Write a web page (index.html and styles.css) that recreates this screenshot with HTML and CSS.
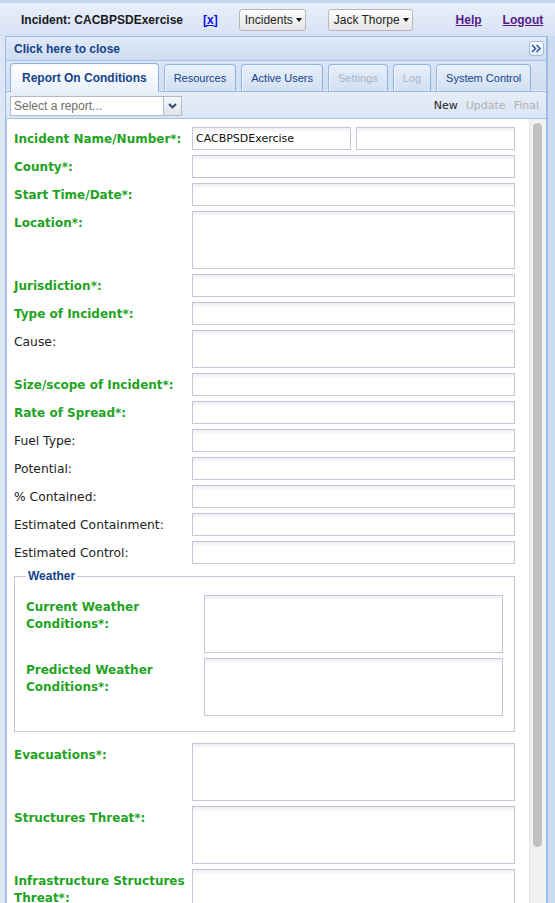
FILE: index.html
```html
<!DOCTYPE html>
<html>
<head>
<meta charset="utf-8">
<link rel="stylesheet" href="styles.css">
</head>
<body>
<div class="topbar">
  <span class="title">Incident: CACBPSDExercise</span>
  <a class="xlink" href="#">[x]</a>
  <span class="drop">Incidents<svg class="tri" width="6" height="4" viewBox="0 0 6 4"><path d="M0 0h6L3 4z" fill="#111"/></svg></span>
  <span class="drop user">Jack Thorpe<svg class="tri" width="6" height="4" viewBox="0 0 6 4"><path d="M0 0h6L3 4z" fill="#111"/></svg></span>
  <a class="link help" href="#">Help</a>
  <a class="link" href="#">Logout</a>
</div>
<div class="frame">
  <div class="panel">
    <div class="phead">
      <span class="ptitle">Click here to close</span>
      <span class="tool"><svg width="11" height="9" viewBox="0 0 11 9"><path d="M1 1l3.5 3.5L1 8M5.5 1L9 4.5 5.5 8" fill="none" stroke="#2b5aa6" stroke-width="1.6"/></svg></span>
    </div>
    <div class="tabstrip">
      <span class="tab active">Report On Conditions</span>
      <span class="tab">Resources</span>
      <span class="tab">Active Users</span>
      <span class="tab disabled">Settings</span>
      <span class="tab disabled">Log</span>
      <span class="tab">System Control</span>
    </div>
    <div class="toolbar">
      <div class="combo">
        <span class="combo-text">Select a report...</span>
        <span class="trigger"><svg width="9" height="6" viewBox="0 0 9 6"><path d="M1 1l3.5 3.5L8 1" fill="none" stroke="#2d4470" stroke-width="1.8"/></svg></span>
      </div>
      <div class="actions">
        <span class="act on">New</span>
        <span class="act">Update</span>
        <span class="act">Final</span>
      </div>
    </div>
    <div class="body">
      <div class="form">
        <div class="row"><label class="req">Incident Name/Number*:</label><div class="pair"><div class="inp">CACBPSDExercise</div><div class="inp"></div></div></div>
        <div class="row"><label class="req">County*:</label><div class="inp"></div></div>
        <div class="row"><label class="req">Start Time/Date*:</label><div class="inp"></div></div>
        <div class="row"><label class="req">Location*:</label><div class="inp ta"></div></div>
        <div class="row"><label class="req">Jurisdiction*:</label><div class="inp"></div></div>
        <div class="row"><label class="req">Type of Incident*:</label><div class="inp"></div></div>
        <div class="row"><label>Cause:</label><div class="inp ta-s"></div></div>
        <div class="row"><label class="req">Size/scope of Incident*:</label><div class="inp"></div></div>
        <div class="row"><label class="req">Rate of Spread*:</label><div class="inp"></div></div>
        <div class="row"><label>Fuel Type:</label><div class="inp"></div></div>
        <div class="row"><label>Potential:</label><div class="inp"></div></div>
        <div class="row"><label>% Contained:</label><div class="inp"></div></div>
        <div class="row"><label>Estimated Containment:</label><div class="inp"></div></div>
        <div class="row"><label>Estimated Control:</label><div class="inp"></div></div>
        <fieldset class="weather">
          <legend>Weather</legend>
          <div class="row"><label class="req">Current Weather Conditions*:</label><div class="inp ta"></div></div>
          <div class="row last"><label class="req">Predicted Weather Conditions*:</label><div class="inp ta"></div></div>
        </fieldset>
        <div class="row"><label class="req">Evacuations*:</label><div class="inp ta"></div></div>
        <div class="row"><label class="req">Structures Threat*:</label><div class="inp ta"></div></div>
        <div class="row"><label class="req">Infrastructure Structures Threat*:</label><div class="inp ta"></div></div>
      </div>
      <div class="scroll"><div class="thumb"></div></div>
    </div>
  </div>
</div>
</body>
</html>
```
FILE: styles.css
```css
html, body { margin: 0; padding: 0; }
body {
  width: 555px;
  height: 903px;
  overflow: hidden;
  background: #dce6f5;
  font-family: "DejaVu Sans", sans-serif;
}
.topbar {
  height: 33px;
  border-top: 3px solid #c3d5ee;
  background: linear-gradient(#e8eff9, #d6e2f4);
  display: flex;
  align-items: center;
  padding-left: 21px;
  font-family: "Liberation Sans", Arial, sans-serif;
  font-size: 12px;
  white-space: nowrap;
}
.topbar > * { flex: none; }
.title { font-weight: bold; color: #1a1a1a; margin-right: 20px; }
.xlink { font-weight: bold; color: #1010e0; margin-right: 21px; }
.drop {
  height: 20px;
  display: inline-flex;
  align-items: center;
  padding: 0 3px 0 5px;
  border: 1px solid #b8b8b8;
  border-radius: 3px;
  background: linear-gradient(#fefefe, #e6e6e6);
  color: #222;
  margin-right: 22px;
}
.drop .tri { margin-left: 3px; }
.drop.user { margin-right: 43px; }
.link { font-weight: bold; color: #551a8b; }
.help { margin-right: 21px; }

.frame {
  height: 867px;
  padding-left: 5px;
  padding-right: 7px;
  background: linear-gradient(90deg, #dce6f5, #dce6f5 95%, #c9d9ef);
}
.panel {
  height: 867px;
  border-left: 1px solid #99bbe8;
  border-right: 2px solid #99bbe8;
  display: flex;
  flex-direction: column;
  background: #d3e0f2;
}
.phead {
  height: 23px;
  flex: none;
  display: flex;
  align-items: center;
  justify-content: space-between;
  padding: 0 2px 0 8px;
  border-top: 1px solid #99bbe8;
  border-bottom: 1px solid #a9c3e8;
  background: linear-gradient(#e2ebf8, #cddcf0);
}
.ptitle {
  font-family: "Liberation Sans", Arial, sans-serif;
  font-weight: bold;
  font-size: 12px;
  color: #15428b;
}
.tool {
  width: 15px;
  height: 15px;
  box-sizing: border-box;
  border: 1px solid #9fbbe3;
  border-radius: 3px;
  background: linear-gradient(#ffffff, #e6eef9);
  display: flex;
  align-items: center;
  justify-content: center;
}
.tabstrip {
  height: 30px;
  flex: none;
  display: flex;
  align-items: flex-end;
  padding-left: 4px;
  background: linear-gradient(#dbe6f5, #cfddf0);
  border-bottom: 1px solid #99bbe8;
  box-shadow: inset 0 -1px 0 #e2ebf8;
  white-space: nowrap;
}
.tab {
  flex: none;
  height: 27px;
  box-sizing: border-box;
  display: flex;
  align-items: center;
  padding: 0 9px;
  margin-right: 5px;
  border: 1px solid #8db2e3;
  border-bottom: none;
  border-radius: 4px 4px 0 0;
  background: linear-gradient(#e7effa, #d2e0f2);
  font-family: "Liberation Sans", Arial, sans-serif;
  font-size: 11px;
  color: #15428b;
  box-shadow: inset 1px 1px 0 #f4f8fd;
}
.tab.active {
  height: 29px;
  padding: 0 11px;
  background: linear-gradient(#ffffff, #e9f0fa);
  font-weight: bold;
  font-size: 12px;
  margin-bottom: -1px;
}
.tab.disabled { color: #a8b4c6; }
.toolbar {
  height: 27px;
  flex: none;
  display: flex;
  align-items: center;
  justify-content: space-between;
  padding: 1px 7px 0 4px;
  box-sizing: border-box;
  background: linear-gradient(#e6edf8, #dae5f4);
  border-bottom: 1px solid #a9c3e8;
}
.combo {
  width: 172px;
  height: 20px;
  box-sizing: border-box;
  display: flex;
  border: 1px solid #b5b8c8;
  background: #fff;
}
.combo-text {
  flex: 1;
  padding-left: 3px;
  font-family: "Liberation Sans", Arial, sans-serif;
  font-size: 12px;
  color: #6e6e6e;
  line-height: 18px;
}
.trigger {
  width: 17px;
  border-left: 1px solid #b5b8c8;
  background: linear-gradient(#f6f8fb, #dfe5ee);
  display: flex;
  align-items: center;
  justify-content: center;
}
.actions { display: flex; gap: 8px; font-size: 11px; }
.act { color: #b0b0b0; }
.act.on { color: #222; }

.body {
  flex: 1;
  display: flex;
  background: #fff;
  overflow: hidden;
  border-left: 1px solid #b8cbe6;
}
.form {
  flex: 1;
  padding: 8px 14px 0 7px;
  overflow: hidden;
}
.row {
  display: flex;
  margin-bottom: 5px;
}
.row.last { margin-bottom: 0; }
.row label {
  width: 178px;
  flex: none;
  padding-top: 4px;
  font-size: 12.3px;
  line-height: 17px;
  color: #222;
}
.row label.req {
  font-weight: bold;
  font-size: 12px;
  color: #22a322;
}
.inp {
  flex: 1;
  height: 23px;
  box-sizing: border-box;
  border: 1px solid #c6c6d8;
  background: linear-gradient(#eeeef2, #ffffff 5px);
  font-size: 11px;
  line-height: 21px;
  padding-left: 3px;
  color: #111;
}
.pair { flex: 1; display: flex; gap: 5px; }
.pair .inp { flex: 1; }
.inp.ta { height: 58px; }
.inp.ta-s { height: 38px; }
.weather {
  margin: 0 0 11px 0;
  padding: 12px 11px 15px 11px;
  border: 1px solid #c6c6d8;
}
.weather legend {
  padding: 0 2px;
  font-family: "Liberation Sans", Arial, sans-serif;
  font-weight: bold;
  font-size: 12px;
  line-height: 14px;
  color: #15428b;
}
.scroll {
  width: 16px;
  flex: none;
  background: #f1f1f1;
  border-left: 1px solid #e4e4e4;
  padding-top: 4px;
}
.thumb {
  width: 9px;
  margin-left: 3px;
  height: 724px;
  border-radius: 5px;
  background: #c1c1c1;
}
```
